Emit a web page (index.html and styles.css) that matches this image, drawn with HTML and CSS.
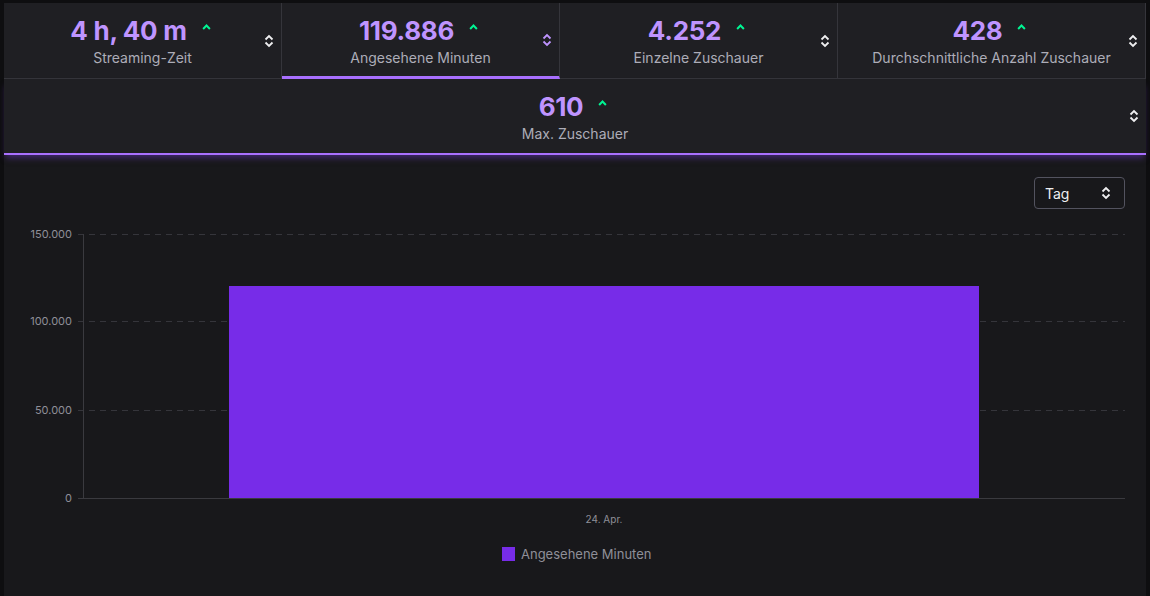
FILE: index.html
```html
<!DOCTYPE html>
<html lang="de">
<head>
    <meta charset="UTF-8">
    <meta name="viewport" content="width=device-width, initial-scale=1.0">
    <title>Stream-Statistiken</title>
    <link rel="stylesheet" href="styles.css">
</head>
<body>
    <div class="panel">
        <!-- Stat Tiles -->
        <div class="tiles">
            <div class="tile">
                <div class="tile-body">
                    <div class="value-line"><span class="value">4 h, 40 m</span><svg class="trend" viewBox="0 0 8 5"><path d="M1 4.2 L4 1.2 L7 4.2" /></svg></div>
                    <div class="label">Streaming-Zeit</div>
                </div>
                <svg class="sort" viewBox="0 0 10 14"><path d="M1.5 5.5 L5 2 L8.5 5.5 M1.5 8.5 L5 12 L8.5 8.5" /></svg>
            </div>
            <div class="tile active">
                <div class="tile-body">
                    <div class="value-line"><span class="value">119.886</span><svg class="trend" viewBox="0 0 8 5"><path d="M1 4.2 L4 1.2 L7 4.2" /></svg></div>
                    <div class="label">Angesehene Minuten</div>
                </div>
                <svg class="sort" viewBox="0 0 10 14"><path d="M1.5 5.5 L5 2 L8.5 5.5 M1.5 8.5 L5 12 L8.5 8.5" /></svg>
            </div>
            <div class="tile">
                <div class="tile-body">
                    <div class="value-line"><span class="value">4.252</span><svg class="trend" viewBox="0 0 8 5"><path d="M1 4.2 L4 1.2 L7 4.2" /></svg></div>
                    <div class="label">Einzelne Zuschauer</div>
                </div>
                <svg class="sort" viewBox="0 0 10 14"><path d="M1.5 5.5 L5 2 L8.5 5.5 M1.5 8.5 L5 12 L8.5 8.5" /></svg>
            </div>
            <div class="tile">
                <div class="tile-body">
                    <div class="value-line"><span class="value">428</span><svg class="trend" viewBox="0 0 8 5"><path d="M1 4.2 L4 1.2 L7 4.2" /></svg></div>
                    <div class="label">Durchschnittliche Anzahl Zuschauer</div>
                </div>
                <svg class="sort" viewBox="0 0 10 14"><path d="M1.5 5.5 L5 2 L8.5 5.5 M1.5 8.5 L5 12 L8.5 8.5" /></svg>
            </div>
        </div>

        <!-- Wide tile -->
        <div class="tile wide">
            <div class="tile-body">
                <div class="value-line"><span class="value">610</span><svg class="trend" viewBox="0 0 8 5"><path d="M1 4.2 L4 1.2 L7 4.2" /></svg></div>
                <div class="label">Max. Zuschauer</div>
            </div>
            <svg class="sort" viewBox="0 0 10 14"><path d="M1.5 5.5 L5 2 L8.5 5.5 M1.5 8.5 L5 12 L8.5 8.5" /></svg>
        </div>

        <!-- Chart -->
        <div class="chart">
            <div class="chart-head">
                <div class="select">
                    <span>Tag</span>
                    <svg class="select-icon" viewBox="0 0 10 14"><path d="M1.5 5.5 L5 2 L8.5 5.5 M1.5 8.5 L5 12 L8.5 8.5" /></svg>
                </div>
            </div>
            <svg class="plot" width="1142" height="387" viewBox="0 0 1142 387">
                <g class="grid">
                    <line x1="74" y1="25.5" x2="1121" y2="25.5" />
                    <line x1="74" y1="112.5" x2="1121" y2="112.5" />
                    <line x1="74" y1="201.5" x2="1121" y2="201.5" />
                </g>
                <line class="axis" x1="79.5" y1="25" x2="79.5" y2="289" />
                <line class="axis" x1="74" y1="289.5" x2="1121" y2="289.5" />
                <g class="ticks">
                    <text x="68" y="29">150.000</text>
                    <text x="68" y="116">100.000</text>
                    <text x="68" y="205">50.000</text>
                    <text x="68" y="293">0</text>
                </g>
                <rect class="bar" x="225" y="77" width="750" height="212" />
                <text class="xlabel" x="600" y="314">24. Apr.</text>
                <rect class="bar" x="498" y="338" width="13" height="14" />
                <text class="legend" x="517" y="350">Angesehene Minuten</text>
            </svg>
        </div>
    </div>
</body>
</html>
```

FILE: styles.css
```css
/* Base Styles */
* {
    box-sizing: border-box;
    margin: 0;
    padding: 0;
}

body {
    font-family: 'Inter', 'Roboto', sans-serif;
    background: #0e0e10;
    height: 596px;
    overflow: hidden;
}

/* Main Panel */
.panel {
    width: 1142px;
    margin: 3px 0 0 4px;
    background: #18181b;
    height: 593px;
}

/* Stat Tiles */
.tiles {
    display: grid;
    grid-template-columns: 278px 278px 278px 1fr;
}

.tile {
    display: grid;
    grid-template-columns: 24px 1fr 24px;
    align-items: center;
    height: 76px;
    background: #1f1f23;
    border-right: 1px solid #35353b;
    border-bottom: 1px solid #35353b;
}

.tile.active {
    border-bottom: 3px solid #a970ff;
}

.tile-body {
    grid-column: 2;
    align-self: start;
    display: flex;
    flex-direction: column;
    align-items: center;
    padding-top: 11px;
}

.value-line {
    display: flex;
    align-items: flex-start;
    gap: 15px;
    height: 34px;
    margin-right: 4px;
}

.value {
    font-size: 26px;
    font-weight: 700;
    color: #bf94ff;
    line-height: 34px;
    letter-spacing: -0.3px;
}

.trend {
    width: 9px;
    height: 6px;
    margin-top: 10px;
    fill: none;
    stroke: #00f593;
    stroke-width: 1.8;
}

.label {
    font-size: 14px;
    color: #adadb8;
    line-height: 18px;
    margin-top: 1px;
}

.sort {
    grid-column: 3;
    justify-self: center;
    width: 10px;
    height: 14px;
    fill: none;
    stroke: #efeff1;
    stroke-width: 1.8;
}

.tile.active .sort {
    stroke: #bf94ff;
}

.tile.wide {
    height: 76px;
    border-right: none;
    border-bottom: 2px solid #a970ff;
    box-shadow: 0 5px 6px -2px rgba(90, 50, 160, 0.6);
    position: relative;
    z-index: 1;
}

/* Chart */
.chart {
    background: #18181b;
}

.chart-head {
    display: flex;
    justify-content: flex-end;
    padding: 22px 21px 0 0;
}

.select {
    display: flex;
    align-items: center;
    justify-content: space-between;
    width: 91px;
    height: 32px;
    padding: 0 13px 0 10px;
    border: 1px solid #53535f;
    border-radius: 4px;
    color: #efeff1;
    font-size: 14px;
}

.select-icon {
    width: 10px;
    height: 14px;
    fill: none;
    stroke: #efeff1;
    stroke-width: 1.8;
}

.plot {
    display: block;
}

.grid line {
    stroke: #35353b;
    stroke-dasharray: 6 5;
}

.axis {
    stroke: #3a3a3f;
}

.ticks text {
    font-size: 11px;
    fill: #8f8f98;
    text-anchor: end;
}

.bar {
    fill: #772ce8;
}

.xlabel {
    font-size: 10px;
    fill: #8f8f98;
    text-anchor: middle;
}

.legend {
    font-size: 13px;
    fill: #8f8f98;
}
```
